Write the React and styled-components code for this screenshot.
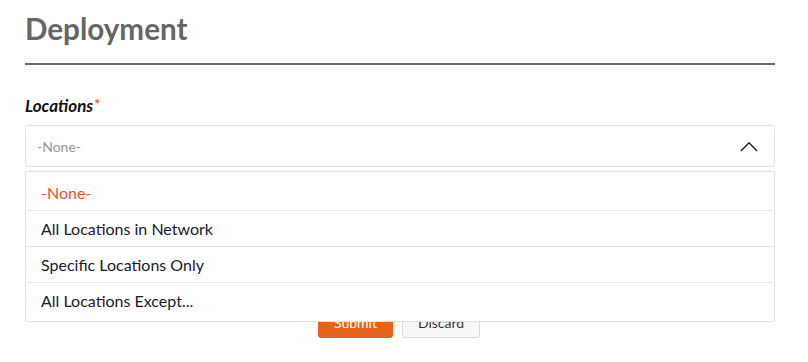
import React from "react";
import styled, { createGlobalStyle } from "styled-components";

const Global = createGlobalStyle`
  html, body { margin: 0; padding: 0; background: #fff; }
  body { font-family: Lato, "Open Sans", sans-serif; color: #222; }
`;

const Page = styled.div`
  padding: 10px 33px 0 25px;
`;

const Title = styled.h1`
  margin: 0;
  font-size: 29.6px;
  line-height: 38px;
  font-weight: 700;
  color: #666;
`;

const Divider = styled.hr`
  margin: 15px 0 0;
  border: 0;
  border-top: 2px solid #666;
`;

const Field = styled.div`
  margin-top: 31px;
  position: relative;
`;

const Label = styled.label`
  display: block;
  font-size: 17px;
  font-weight: 700;
  font-style: italic;
  color: #111;
  line-height: 20px;
  margin-bottom: 9px;
`;

const Required = styled.span`
  color: #e8562a;
  font-style: normal;
  font-size: 14px;
  vertical-align: top;
  line-height: 16px;
  margin-left: 1px;
`;

const SelectBox = styled.div`
  height: 40px;
  border: 1px solid #e2e2e4;
  border-radius: 4px;
  display: flex;
  align-items: center;
  justify-content: space-between;
  padding: 0 16px 0 11px;
  font-size: 14px;
  color: #999;
`;

const Menu = styled.ul`
  position: absolute;
  left: 0;
  right: 0;
  top: calc(100% + 4px);
  margin: 0;
  padding: 3px 0;
  list-style: none;
  background: #fff;
  border: 1px solid #e2e2e4;
  border-radius: 2px;
  z-index: 2;
`;

const Item = styled.li`
  height: 35px;
  padding: 0 15px;
  display: flex;
  align-items: center;
  font-size: 16px;
  color: ${(p) => (p.$active ? "#e8562a" : "#1a1a2a")};
  & + & { border-top: 1px solid #e4e4e8; }
`;

const Actions = styled.div`
  display: flex;
  justify-content: center;
  gap: 9px;
  margin-top: 140px;
  padding-right: 2px;
`;

const Button = styled.button`
  height: 31px;
  padding: 0 14px;
  font-family: inherit;
  font-size: 14px;
  border-radius: 3px;
  border: 1px solid ${(p) => (p.$primary ? "#e5631a" : "#dcdcdc")};
  background: ${(p) => (p.$primary ? "#e5631a" : "#f7f7f7")};
  color: ${(p) => (p.$primary ? "#fff" : "#333")};
  width: ${(p) => p.$w}px;
`;

export default function App() {
  return (
    <>
      <Global />
      <Page>
        <Title>Deployment</Title>
        <Divider />
        <Field>
          <Label>
            Locations<Required>*</Required>
          </Label>
          <SelectBox>
            <span>-None-</span>
            <svg width="18" height="11" viewBox="0 0 18 11" fill="none">
              <path d="M1 10 L9 1.8 L17 10" stroke="#222" strokeWidth="1.4" />
            </svg>
          </SelectBox>
          <Menu>
            <Item $active>-None-</Item>
            <Item>All Locations in Network</Item>
            <Item>Specific Locations Only</Item>
            <Item>All Locations Except...</Item>
          </Menu>
        </Field>
        <Actions>
          <Button $primary $w={75}>Submit</Button>
          <Button $w={78}>Discard</Button>
        </Actions>
      </Page>
    </>
  );
}
